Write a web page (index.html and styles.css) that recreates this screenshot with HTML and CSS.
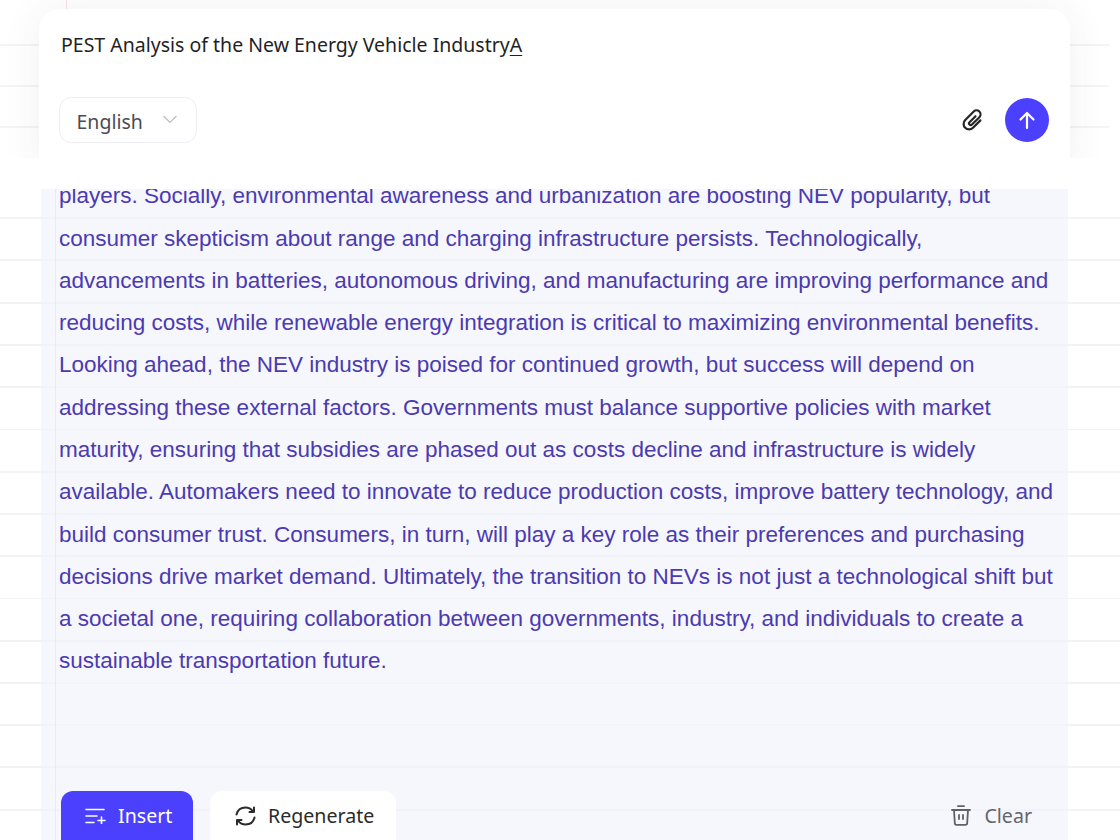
FILE: index.html
```html
<!DOCTYPE html>
<html lang="en">
<head>
    <meta charset="UTF-8">
    <meta name="viewport" content="width=device-width, initial-scale=1.0">
    <title>PEST Analysis</title>
    <link rel="stylesheet" href="styles.css">
</head>
<body>
    <div class="page">
        <div class="composer-strip">
            <div class="composer">
                <div class="prompt">PEST Analysis of the New Energy Vehicle Industry<span class="caret">A</span></div>
                <div class="composer-bar">
                    <div class="lang-select">
                        <span>English</span>
                        <svg class="chevron" width="16" height="16" viewBox="0 0 16 16" fill="none" stroke="#b9bbc0" stroke-width="1.2"><path d="M1.500 4 8 10.500 14.500 4"/></svg>
                    </div>
                    <div class="composer-actions">
                        <svg class="clip" width="24" height="24" viewBox="0 0 24 24" fill="none" stroke="#262626" stroke-width="2.200" stroke-linecap="round" stroke-linejoin="round"><path transform="rotate(45 12 12)" d="M17.500 7v10.500a5.500 5.500 0 0 1-11 0V5.500a4 4 0 0 1 8 0V16a1.700 1.700 0 0 1-3.400 0V7.500"/></svg>
                        <button class="send-btn">
                            <svg width="20" height="20" viewBox="0 0 20 20" fill="none" stroke="#fff" stroke-width="2.200" stroke-linecap="round" stroke-linejoin="round"><path d="M10 18V3M3.500 9.500 10 3l6.500 6.500"/></svg>
                        </button>
                    </div>
                </div>
            </div>
        </div>

        <div class="spacer"></div>

        <div class="result">
            <div class="result-text">
                players. Socially, environmental awareness and urbanization are boosting NEV popularity, but<br>
                consumer skepticism about range and charging infrastructure persists. Technologically,<br>
                advancements in batteries, autonomous driving, and manufacturing are improving performance and<br>
                reducing costs, while renewable energy integration is critical to maximizing environmental benefits.<br>
                Looking ahead, the NEV industry is poised for continued growth, but success will depend on<br>
                addressing these external factors. Governments must balance supportive policies with market<br>
                maturity, ensuring that subsidies are phased out as costs decline and infrastructure is widely<br>
                available. Automakers need to innovate to reduce production costs, improve battery technology, and<br>
                build consumer trust. Consumers, in turn, will play a key role as their preferences and purchasing<br>
                decisions drive market demand. Ultimately, the transition to NEVs is not just a technological shift but<br>
                a societal one, requiring collaboration between governments, industry, and individuals to create a<br>
                sustainable transportation future.
            </div>
            <div class="result-actions">
                <button class="btn btn-primary">
                    <svg width="21" height="16" viewBox="0 0 21 16" fill="none" stroke="#fff" stroke-width="1.600" stroke-linecap="round"><path d="M1 1.500h18M1 8h11M1 14.500h8M13 12.500h7M16.500 9v7"/></svg>
                    Insert
                </button>
                <button class="btn btn-white">
                    <svg width="21" height="20" viewBox="0 0 21 20" fill="none" stroke="#2b2b2b" stroke-width="2" stroke-linecap="round" stroke-linejoin="round"><path d="M1.500 8.500C2.500 4.200 6 1.500 10.500 1.500c3 0 5.500 1.300 7.200 3.700"/><path d="M19 1.500v4.500h-4.500"/><path d="M19.500 11.500c-1 4.300-4.500 7-9 7-3 0-5.500-1.300-7.200-3.700"/><path d="M2 18.500V14h4.500"/></svg>
                    Regenerate
                </button>
                <button class="btn btn-clear">
                    <svg width="20" height="21" viewBox="0 0 20 21" fill="none" stroke="#5f6166" stroke-width="1.800" stroke-linecap="round" stroke-linejoin="round"><path d="M1 5h18M7 1.200h6M3 5l.8 13a1.800 1.800 0 0 0 1.800 1.800h8.800a1.800 1.800 0 0 0 1.800-1.800L17 5M8 10v4M12 10v4"/></svg>
                    Clear
                </button>
            </div>
        </div>
    </div>
</body>
</html>
```

FILE: styles.css
```css
body, html {
    margin: 0;
    padding: 0;
    font-family: "Noto Sans", Arial, sans-serif;
    background-color: #ffffff;
}

.page {
    width: 1120px;
    height: 840px;
    overflow: hidden;
    background-image:
        linear-gradient(90deg, transparent 55px, #f4d6da 55px, #f4d6da 56px, transparent 56px),
        repeating-linear-gradient(180deg, transparent 0, transparent 40.25px, #f3f3f4 40.25px, #f3f3f4 42.25px);
    background-position: 0 0, 0 8px;
}

.composer-strip {
    width: 1120px;
    height: 158px;
    box-sizing: border-box;
    padding: 9px 0 0 39px;
    overflow: hidden;
    border-right: 11px solid #ffffff;
    background-color: #ffffff;
    background-image:
        linear-gradient(90deg, transparent 66px, #f7e3e6 66px, #f7e3e6 67px, transparent 67px),
        repeating-linear-gradient(180deg, transparent 0, transparent 39px, #f4f4f5 39px, #f4f4f5 41px);
    background-position: 0 0, 0 5px;
}

.composer {
    width: 1031px;
    height: 170px;
    box-sizing: border-box;
    padding: 21px 21px 0 20px;
    background-color: #ffffff;
    border-radius: 20px;
    box-shadow: 0 0 40px rgba(60, 60, 90, 0.07);
}

.prompt {
    padding-left: 2px;
    font-size: 19.5px;
    line-height: 30px;
    color: #1f1f24;
}

.caret {
    text-decoration: underline;
    text-underline-offset: 3px;
}

.composer-bar {
    display: flex;
    justify-content: space-between;
    align-items: center;
    margin-top: 37px;
}

.lang-select {
    display: flex;
    align-items: center;
    gap: 19px;
    width: 138px;
    height: 46px;
    box-sizing: border-box;
    padding-left: 16.5px;
    border: 1px solid #eeeff5;
    border-radius: 12px;
    font-size: 19.5px;
    color: #4a4c52;
}

.lang-select span {
    padding-top: 2px;
}

.composer-actions {
    display: flex;
    align-items: center;
    gap: 20px;
}

.send-btn {
    display: flex;
    align-items: center;
    justify-content: center;
    width: 44px;
    height: 44px;
    padding: 0;
    border: none;
    border-radius: 50%;
    background-color: #4c40ff;
}

.spacer {
    height: 31px;
    background-color: #ffffff;
}

.result {
    display: flex;
    flex-direction: column;
    justify-content: space-between;
    height: 651px;
    margin: 0 52px 0 41px;
    overflow: hidden;
    background-color: rgba(240, 241, 252, 0.62);
}

.result-text {
    margin-top: -13.8px;
    padding-left: 18px;
    font-family: "Liberation Sans", Arial, sans-serif;
    font-size: 22.5px;
    line-height: 42.3px;
    white-space: nowrap;
    color: #4b3ab0;
}

.result-actions {
    display: flex;
    align-items: flex-start;
    gap: 17px;
    height: 49px;
    padding-left: 20px;
    padding-right: 36px;
}

.btn {
    display: flex;
    align-items: center;
    gap: 12px;
    height: 49px;
    padding: 0;
    border: none;
    font-family: "Noto Sans", Arial, sans-serif;
    font-size: 19.6px;
    border-radius: 12px 12px 0 0;
}

.btn-primary {
    width: 132px;
    padding-left: 24px;
    background-color: #4c40ff;
    color: #ffffff;
}

.btn-white {
    width: 186px;
    padding-left: 25px;
    background-color: #ffffff;
    color: #2b2b2b;
}

.btn-clear {
    margin-left: auto;
    gap: 13px;
    background: none;
    color: #63656b;
}
```
